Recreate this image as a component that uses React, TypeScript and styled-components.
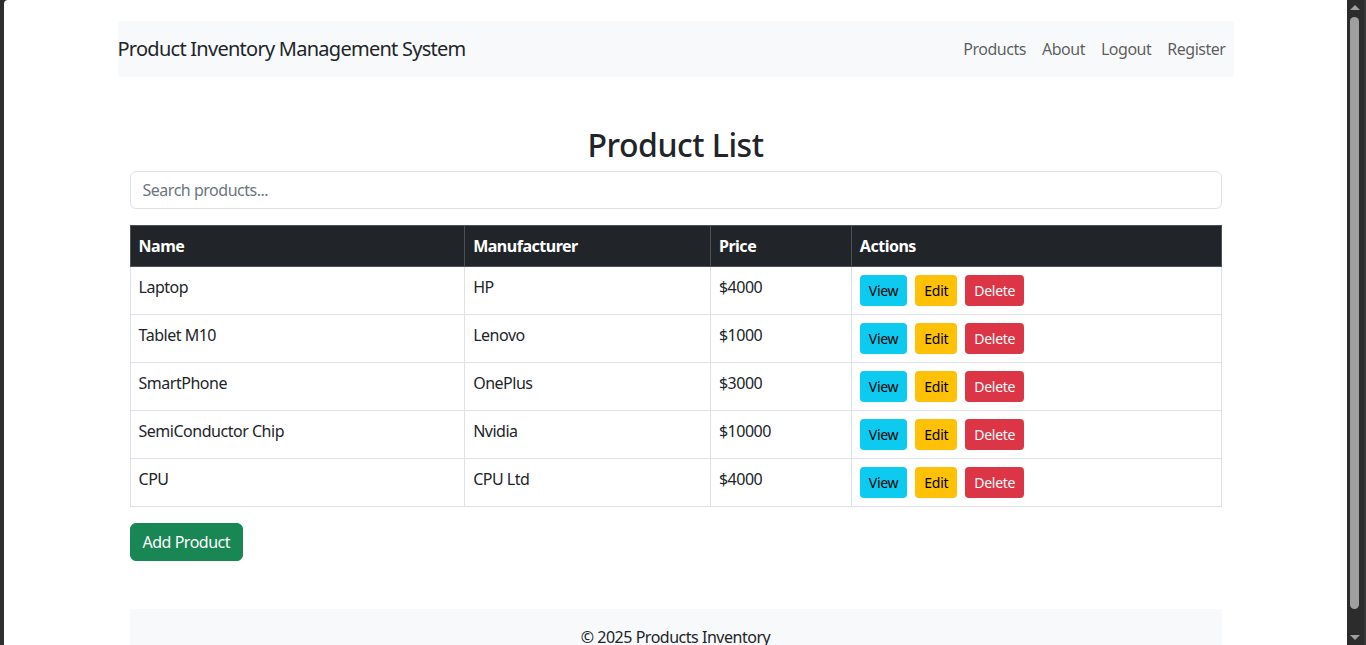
import React from "react";
import styled, { createGlobalStyle } from "styled-components";

const Global = createGlobalStyle`
  html, body { margin: 0; padding: 0; height: 100%; overflow: hidden; }
  body {
    font-family: "Noto Sans", "Open Sans", Arial, sans-serif;
    font-size: 16px;
    line-height: 1.5;
    letter-spacing: -0.03em;
    color: #212529;
    background: #fff;
  }
  * { box-sizing: border-box; }
`;

const Window = styled.div`
  display: flex;
  height: 645px;
  width: 1366px;
  background: #2b2b2b;
`;

const LeftEdge = styled.div`
  width: 4px;
  flex: none;
  background: #2e2e2e;
`;

const Viewport = styled.div`
  flex: 1;
  background: #fff;
  overflow: hidden;
  border-top-left-radius: 4px;
`;

const Scrollbar = styled.div`
  width: 19px;
  flex: none;
  background: #2c2c2c;
  display: flex;
  flex-direction: column;
  align-items: center;
  padding: 3px 2px 3px 0;
  border-right: 2px solid #353535;
`;

const Arrow = styled.div<{ $down?: boolean }>`
  width: 0;
  height: 0;
  border-left: 5px solid transparent;
  border-right: 5px solid transparent;
  ${(p) =>
    p.$down
      ? "border-top: 5px solid #a0a0a0;"
      : "border-bottom: 5px solid #a0a0a0;"}
  margin: 2px 0;
`;

const Thumb = styled.div`
  width: 9px;
  flex: 1;
  margin: 5px 0 24px;
  background: #9f9f9f;
  border-radius: 5px;
`;

const Outer = styled.div`
  width: 1140px;
  margin: 21px auto 0;
  padding: 0 12px;
`;

const Navbar = styled.nav`
  background: #f8f9fa;
  height: 56px;
  display: flex;
  align-items: center;
  justify-content: space-between;
`;

const Brand = styled.span`
  font-size: 20px;
  letter-spacing: -0.037em;
  color: #212529;
  line-height: 30px;
`;

const NavList = styled.div`
  display: flex;
  align-items: center;
`;

const NavLink = styled.a`
  color: rgba(0, 0, 0, 0.65);
  padding: 8px;
  text-decoration: none;
  font-size: 16px;
`;

const Main = styled.main`
  margin-top: 49px;
  padding: 0 12px;
`;

const Title = styled.h2`
  text-align: center;
  font-size: 32px;
  font-weight: 500;
  line-height: 1.2;
  margin: 0 0 7px;
`;

const Search = styled.input`
  display: block;
  width: 100%;
  height: 38px;
  padding: 6px 12px;
  font: inherit;
  font-size: 16px;
  letter-spacing: -0.03em;
  color: #212529;
  border: 1px solid #dee2e6;
  border-radius: 6px;
  margin-bottom: 16px;
  outline: none;
  &::placeholder { color: #6c757d; }
`;

const Table = styled.table`
  width: 100%;
  border-collapse: collapse;
  margin-bottom: 16px;
`;

const Th = styled.th<{ $w: number }>`
  width: ${(p) => p.$w}px;
  background: #212529;
  color: #fff;
  text-align: left;
  font-weight: 700;
  padding: 8px;
  border: 1px solid #4d5154;
  line-height: 24px;
  height: 41px;
`;

const Td = styled.td`
  padding: 8px;
  border: 1px solid #dee2e6;
  vertical-align: top;
  line-height: 24px;
  height: 48px;
`;

const Actions = styled.div`
  display: flex;
  gap: 8px;
`;

const SmallBtn = styled.button<{ $kind: "info" | "warning" | "danger" }>`
  font: inherit;
  font-size: 14px;
  letter-spacing: -0.02em;
  line-height: 21px;
  padding: 4px 8px;
  border-radius: 4px;
  border: 1px solid transparent;
  background: ${(p) =>
    p.$kind === "info" ? "#0dcaf0" : p.$kind === "warning" ? "#ffc107" : "#dc3545"};
  color: ${(p) => (p.$kind === "danger" ? "#fff" : "#000")};
`;

const AddBtn = styled.button`
  font: inherit;
  font-size: 16px;
  letter-spacing: -0.03em;
  line-height: 24px;
  padding: 6px 12px;
  border-radius: 6px;
  border: 1px solid #198754;
  background: #198754;
  color: #fff;
`;

const Footer = styled.footer`
  margin-top: 48px;
  background: #f8f9fa;
  padding: 16px 0;
  text-align: center;
`;

const products = [
  { name: "Laptop", mfr: "HP", price: "$4000" },
  { name: "Tablet M10", mfr: "Lenovo", price: "$1000" },
  { name: "SmartPhone", mfr: "OnePlus", price: "$3000" },
  { name: "SemiConductor Chip", mfr: "Nvidia", price: "$10000" },
  { name: "CPU", mfr: "CPU Ltd", price: "$4000" },
];

export default function App() {
  return (
    <>
      <Global />
      <Window>
        <LeftEdge />
        <Viewport>
          <Outer>
            <Navbar>
              <Brand>Product Inventory Management System</Brand>
              <NavList>
                <NavLink>Products</NavLink>
                <NavLink>About</NavLink>
                <NavLink>Logout</NavLink>
                <NavLink>Register</NavLink>
              </NavList>
            </Navbar>
            <Main>
              <Title>Product List</Title>
              <Search placeholder="Search products..." />
              <Table>
                <thead>
                  <tr>
                    <Th $w={335}>Name</Th>
                    <Th $w={246}>Manufacturer</Th>
                    <Th $w={141}>Price</Th>
                    <Th $w={370}>Actions</Th>
                  </tr>
                </thead>
                <tbody>
                  {products.map((p) => (
                    <tr key={p.name}>
                      <Td>{p.name}</Td>
                      <Td>{p.mfr}</Td>
                      <Td>{p.price}</Td>
                      <Td>
                        <Actions>
                          <SmallBtn $kind="info">View</SmallBtn>
                          <SmallBtn $kind="warning">Edit</SmallBtn>
                          <SmallBtn $kind="danger">Delete</SmallBtn>
                        </Actions>
                      </Td>
                    </tr>
                  ))}
                </tbody>
              </Table>
              <AddBtn>Add Product</AddBtn>
              <Footer>© 2025 Products Inventory</Footer>
            </Main>
          </Outer>
        </Viewport>
        <Scrollbar>
          <Arrow />
          <Thumb />
          <Arrow $down />
        </Scrollbar>
      </Window>
    </>
  );
}
